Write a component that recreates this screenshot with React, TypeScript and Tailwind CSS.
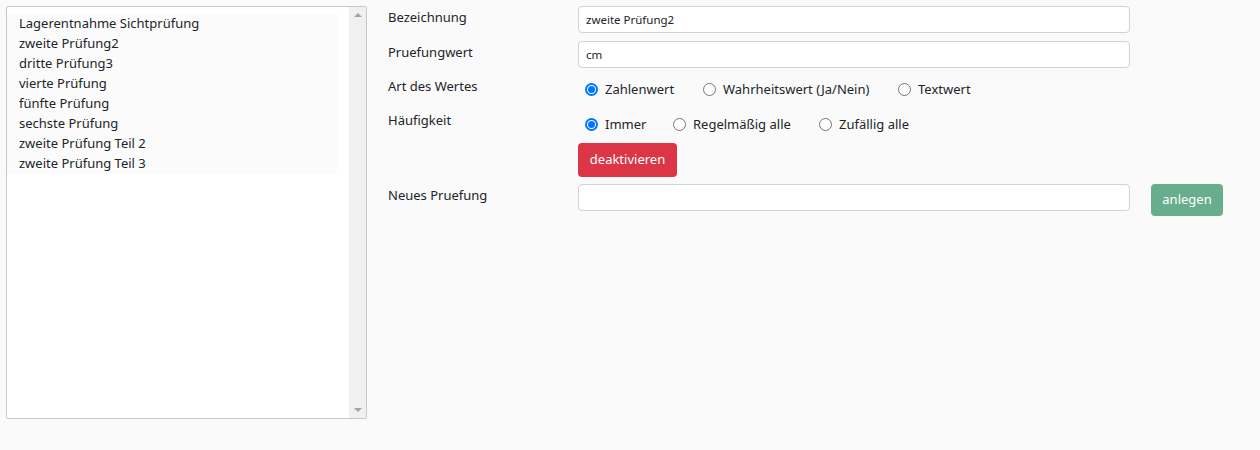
const pruefungen = [
  "Lagerentnahme Sichtprüfung",
  "zweite Prüfung2",
  "dritte Prüfung3",
  "vierte Prüfung",
  "fünfte Prüfung",
  "sechste Prüfung",
  "zweite Prüfung Teil 2",
  "zweite Prüfung Teil 3",
];

type Option = { label: string; checked?: boolean; w: string };

function Radio({ checked }: { checked?: boolean }) {
  if (checked) {
    return (
      <span className="w-[13px] h-[13px] rounded-full border-2 border-[#0075ff] bg-white flex items-center justify-center shrink-0">
        <span className="w-[7px] h-[7px] rounded-full bg-[#0075ff]" />
      </span>
    );
  }
  return <span className="w-[13px] h-[13px] rounded-full border border-[#767676] bg-white shrink-0" />;
}

function RadioGroup({ options }: { options: Option[] }) {
  return (
    <div className="flex items-center pl-[7px]">
      {options.map((o) => (
        <label key={o.label} className={`flex items-center gap-[7px] ${o.w}`}>
          <Radio checked={o.checked} />
          <span className="text-[13px] leading-5">{o.label}</span>
        </label>
      ))}
    </div>
  );
}

export default function App() {
  return (
    <div
      className="min-h-[450px] bg-[#fafafa] flex items-start p-[6px] text-[#212529]"
      style={{ fontFamily: '"Noto Sans", "Open Sans", sans-serif' }}
    >
      {/* liste der pruefungen */}
      <div className="w-[361px] h-[413px] border border-[#c8c8c8] rounded-[2px] bg-white flex shrink-0">
        <div className="flex-1 pt-[6px]">
          <div className="bg-[#fbfbfb] mr-[12px]">
            {pruefungen.map((p) => (
              <div key={p} className="pl-3 text-[13px] leading-5 h-5 whitespace-nowrap">
                {p}
              </div>
            ))}
          </div>
        </div>
        <div className="w-[17px] bg-[#f0f0f0] flex flex-col justify-between items-center py-[6px]">
          <span className="w-0 h-0 border-x-[4px] border-x-transparent border-b-[4px] border-b-[#a3a3a3]" />
          <span className="w-0 h-0 border-x-[4px] border-x-transparent border-t-[4px] border-t-[#a3a3a3]" />
        </div>
      </div>

      {/* formular */}
      <div className="ml-[21px] flex flex-col">
        <div className="flex items-start h-[35px]">
          <div className="w-[190px] pt-[1px] text-[13px] leading-5">Bezeichnung</div>
          <input
            readOnly
            value="zweite Prüfung2"
            className="w-[552px] h-[27px] border border-[#ced4da] rounded bg-white px-[7px] text-[11.5px] outline-none"
          />
        </div>
        <div className="flex items-start h-[35px]">
          <div className="w-[190px] pt-[1px] text-[13px] leading-5">Pruefungwert</div>
          <input
            readOnly
            value="cm"
            className="w-[552px] h-[27px] border border-[#ced4da] rounded bg-white px-[7px] text-[11.5px] outline-none"
          />
        </div>
        <div className="flex items-start h-[34px]">
          <div className="w-[190px] text-[13px] leading-5">Art des Wertes</div>
          <div className="pt-[3px]">
            <RadioGroup
              options={[
                { label: "Zahlenwert", checked: true, w: "w-[118px]" },
                { label: "Wahrheitswert (Ja/Nein)", w: "w-[195px]" },
                { label: "Textwert", w: "" },
              ]}
            />
          </div>
        </div>
        <div className="flex items-start h-[33px]">
          <div className="w-[190px] text-[13px] leading-5">Häufigkeit</div>
          <div className="pt-[4px]">
            <RadioGroup
              options={[
                { label: "Immer", checked: true, w: "w-[88px]" },
                { label: "Regelmäßig alle", w: "w-[146px]" },
                { label: "Zufällig alle", w: "" },
              ]}
            />
          </div>
        </div>
        <div className="flex h-[41px]">
          <button className="ml-[190px] w-[99px] h-[34px] rounded bg-[#dc3545] text-white text-[13px]">
            deaktivieren
          </button>
        </div>
        <div className="flex items-start">
          <div className="w-[190px] pt-[1px] text-[13px] leading-5">Neues Pruefung</div>
          <input className="w-[552px] h-[27px] border border-[#ced4da] rounded bg-white px-[7px] text-[11.5px] outline-none" />
          <button className="ml-[21px] w-[72px] h-[32px] rounded bg-[#68ae8d] text-white text-[13px]">
            anlegen
          </button>
        </div>
      </div>
    </div>
  );
}
